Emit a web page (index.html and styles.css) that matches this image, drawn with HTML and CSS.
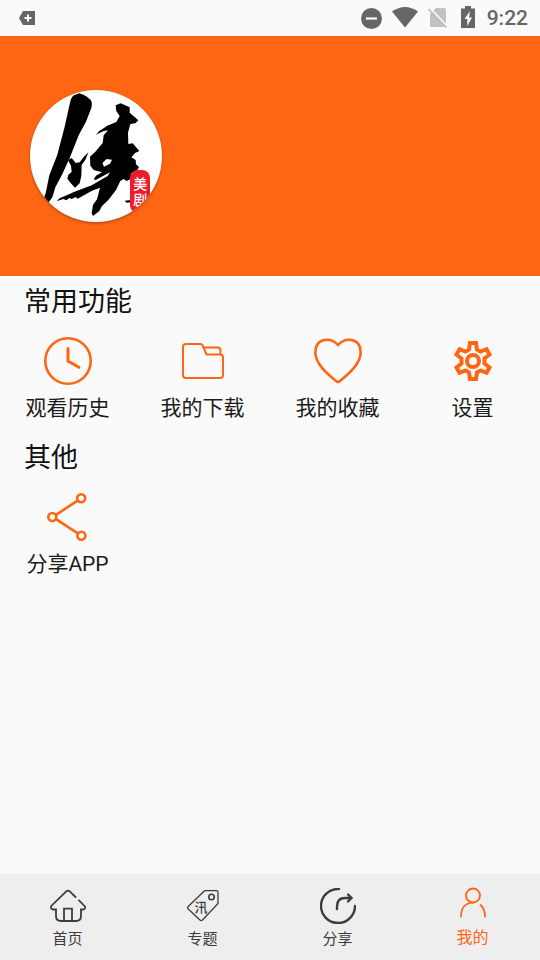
FILE: index.html
```html
<!DOCTYPE html>
<html lang="zh-CN">
<head>
  <meta charset="UTF-8">
  <meta name="viewport" content="width=device-width, initial-scale=1">
  <title>我的</title>
  <link rel="stylesheet" href="styles.css">
</head>
<body>
  <div class="status-bar">
    <svg class="status-note" width="16" height="14" viewBox="0 0 16 14">
      <path d="M4 0h12v14H4L0 7z" fill="#666"/>
      <path d="M9 3.500v7M5.500 7h7" stroke="#fafafa" stroke-width="2"/>
    </svg>
    <div class="status-icons">
      <svg width="21" height="24" viewBox="0 0 21 24">
        <circle cx="10.500" cy="12.500" r="10.500" fill="#666"/>
        <path d="M5 12.500h11" stroke="#fafafa" stroke-width="2.200"/>
      </svg>
      <svg width="26" height="24" viewBox="0 0 26 24">
        <path d="M0 5.500Q13-3.500 26 5.500L13 21.500z" fill="#666"/>
      </svg>
      <svg width="23" height="24" viewBox="0 0 23 24">
        <path d="M8 2h8q2 0 2 2v17H2V8z" fill="#c2c2c2"/>
        <path d="M1.500 2L20 21" stroke="#fafafa" stroke-width="2"/>
        <path d="M.500 3l18 18.500" stroke="#bbb" stroke-width="1.600"/>
      </svg>
      <svg width="16" height="24" viewBox="0 0 16 24">
        <path d="M4 0h6v2.500h4V22H0V2.500h4z" fill="#666"/>
        <path d="M9 5L3.500 13H6.300V20L11 11.500H8z" fill="#fafafa"/>
      </svg>
      <span class="time">9:22</span>
    </div>
  </div>

  <header class="banner">
    <svg class="avatar" width="150" height="150" viewBox="0 0 450 450" role="img" aria-label="头像">
      <defs>
        <clipPath id="face"><circle cx="228" cy="228" r="198"/></clipPath>
      </defs>
      <circle class="avatar-face" cx="228" cy="228" r="198"/>
      <g clip-path="url(#face)">
        <!-- brush strokes -->
        <path d="M150 68Q154 50 162 46L178 40Q200 47 212 60Q218 68 214 84L198 125 176 166 150 232 126 284 106 322 97 352 84 370 68 366 78 335 88 286 112 224 134 140z"/>
        <path d="M144 240L155 234 167 249 179 247 191 231 205 217 197 238 185 255 184 288 179 310 165 323 152 309 142 296 145 284 155 276 153 257z"/>
        <path fill-rule="evenodd" d="M287 76L302 70 329 82 329 98 355 121 346 130 331 132 324 158 325 192 338 190 358 213 345 219 334 232 347 240 348 253 357 261 352 270 334 280 333 296 320 303 311 297 301 303 288 330 265 360 246 378 238 393 219 408 215 400 219 374 231 358 240 323 216 332 173 356 167 351 155 357 148 354 139 361 130 357 110 364 119 355 160 337 215 316 263 288 270 277 227 300 221 298 228 287 246 277 221 270 211 257 210 230 226 215 248 189 251 166 264 151 249 154 228 164 238 153 262 137 289 126 299 108 289 94zM247 249L252 260 270 251 276 239 260 237z"/>
        <path d="M314 362l20-2v7l-14 1z"/>
        <rect x="330" y="270" width="60" height="130" rx="24" fill="#ed1c2a"/>
        <text class="seal" x="361" y="328">美</text>
        <text class="seal" x="361" y="376">剧</text>
      </g>
    </svg>
  </header>

  <main class="content">
    <section>
      <h2>常用功能</h2>
      <div class="grid">
        <button type="button" class="item">
          <svg width="48" height="48" viewBox="0 0 48 48" class="icon">
            <circle cx="24" cy="24" r="22.700"/>
            <path d="M24 11.500V24l11 6.200" stroke-width="3" stroke-linecap="round"/>
          </svg>
          <span>观看历史</span>
        </button>
        <button type="button" class="item">
          <svg width="48" height="48" viewBox="0 0 48 48" class="icon thin">
            <path d="M7 7H21.500Q23 7 23.700 8.500L27.500 17.500H41Q44 17.500 44 20.500V38Q44 41 41 41H7Q4 41 4 38V10Q4 7 7 7z"/>
            <path d="M24 10.500H38.500Q41.500 10.500 41.500 13.500V17.500"/>
          </svg>
          <span>我的下载</span>
        </button>
        <button type="button" class="item">
          <svg width="48" height="48" viewBox="0 0 48 48" class="icon">
            <path d="M24 8C16.500-.500 1.200 1 1.300 15.500C1.300 26.500 13 36.500 22 44Q24 45.800 26 44C35 36.500 46.700 26.500 46.700 15.500C46.800 1 31.500-.500 24 8z"/>
          </svg>
          <span>我的收藏</span>
        </button>
        <button type="button" class="item">
          <svg width="48" height="48" viewBox="0 0 48 48" class="icon gear">
            <path d="M21 6h6l1 6.500 3.500 2 6-2.300 3 5.300-5 4v5l5 4-3 5.300-6-2.300-3.500 2-1 6.500h-6l-1-6.500-3.500-2-6 2.300-3-5.300 5-4v-5l-5-4 3-5.300 6 2.300 3.500-2z"/>
            <circle cx="24" cy="24" r="6"/>
          </svg>
          <span>设置</span>
        </button>
      </div>
    </section>

    <section>
      <h2>其他</h2>
      <div class="grid">
        <button type="button" class="item">
          <svg width="48" height="48" viewBox="0 0 48 48" class="icon">
            <circle cx="8.300" cy="24" r="4"/>
            <circle cx="37.200" cy="5.200" r="4"/>
            <circle cx="37.400" cy="42.800" r="4"/>
            <path d="M12 21.800L33.600 7.600M12 26.200l21.800 14.200"/>
          </svg>
          <span>分享APP</span>
        </button>
      </div>
    </section>
  </main>

  <nav class="tab-bar">
    <a href="#home" class="tab">
      <svg width="36" height="36" viewBox="0 0 36 36">
        <path d="M25.500 9L19.500 3.200Q18 2 16.500 3.200L1.500 17.700Q0 20.700 3 21.500H6V28Q6 33 11 33H26Q31 33 31 28V21.500H33.500Q36.200 20.500 34.500 18L29 12.300M14 33V20.700H22V33"/>
      </svg>
      <span>首页</span>
    </a>
    <a href="#topic" class="tab">
      <svg width="36" height="36" viewBox="0 0 36 36" class="tag">
        <path d="M20.500 2.700H31.500Q33 2.700 33 4.200V15.500L17.500 32Q16.300 33.200 15 32L3 20.800Q2 19.800 3 18.800L19 3.300Q19.600 2.700 20.500 2.700z"/>
        <circle cx="26.500" cy="9" r="2.700" stroke-width="1.600"/>
        <text x="16" y="24">汛</text>
      </svg>
      <span>专题</span>
    </a>
    <a href="#share" class="tab">
      <svg width="36" height="36" viewBox="0 0 36 36" class="bold">
        <path d="M19 1A17 17 0 1 0 35 18"/>
        <path d="M17 21V18.500Q17 10 25 10H31M28 6.500l3.500 3.500-3.500 3.500"/>
      </svg>
      <span>分享</span>
    </a>
    <a href="#mine" class="tab active">
      <svg width="36" height="36" viewBox="0 0 36 36">
        <circle cx="18" cy="10.500" r="7"/>
        <path d="M6 31.500C6 23 10.500 17.800 18 17.600M25.500 20Q30 24 30 31.500"/>
      </svg>
      <span>我的</span>
    </a>
  </nav>
</body>
</html>
```
FILE: styles.css
```css
* { box-sizing: border-box; }
body {
  margin: 0;
  min-height: 100vh;
  display: flex;
  flex-direction: column;
  background: #fafafa;
  color: #1c1c1c;
  font-family: Roboto, "Noto Sans CJK SC", sans-serif;
}
svg {
  display: block;
  fill: none;
}

/* Status bar */
.status-bar {
  display: flex;
  align-items: center;
  justify-content: space-between;
  height: 36px;
  padding: 0 12px 0 19px;
}
.status-icons {
  display: flex;
  align-items: center;
  gap: 10px;
}
.time {
  color: #666;
  font-size: 21px;
  font-weight: 500;
  line-height: 24px;
}

/* Banner */
.banner {
  padding: 44px 20px 46px;
  background: #ff6613;
}
.avatar { fill: #000; }
.avatar-face {
  fill: #fff;
  filter: drop-shadow(0 4px 4px rgba(0,0,0,0.3));
}
.seal {
  fill: #fff;
  font-size: 42px;
  font-weight: 500;
  text-anchor: middle;
}

/* Sections */
.content { flex: 1; }
h2 {
  margin: 0;
  padding: 2px 24px 0;
  color: #111;
  font-size: 27px;
  font-weight: normal;
  line-height: 48px;
}
.grid {
  display: grid;
  grid-template-columns: repeat(4, 1fr);
}
.item {
  display: flex;
  flex-direction: column;
  align-items: center;
  gap: 11px;
  padding: 11px 0 12px;
  border: none;
  background: none;
  color: inherit;
  font-family: inherit;
  font-size: 21px;
  line-height: 24px;
  cursor: pointer;
}
.icon {
  stroke: #ff6613;
  stroke-width: 2.6;
  overflow: visible;
}
.thin { stroke-width: 2; }
.gear { stroke-width: 4; }

/* Bottom tabs */
.tab-bar {
  display: grid;
  grid-template-columns: repeat(4, 1fr);
  background: #eee;
  box-shadow: 0 0 2px rgba(0,0,0,0.06);
}
.tab {
  display: flex;
  flex-direction: column;
  align-items: center;
  gap: 5px;
  padding: 14px 0 11px;
  color: #3c3c3c;
  font-size: 15px;
  line-height: 20px;
  text-decoration: none;
}
.tab svg {
  stroke: currentColor;
  stroke-width: 1.8;
  stroke-linecap: round;
}
.tab .tag { stroke-width: 1.3; }
.tab .bold { stroke-width: 2.4; }
.tag text {
  fill: currentColor;
  stroke: none;
  font-size: 13px;
  font-weight: 500;
  text-anchor: middle;
}
.tab.active {
  gap: 7px;
  padding-top: 11px;
  padding-bottom: 12px;
  color: #ff6613;
  font-size: 16px;
}
```
